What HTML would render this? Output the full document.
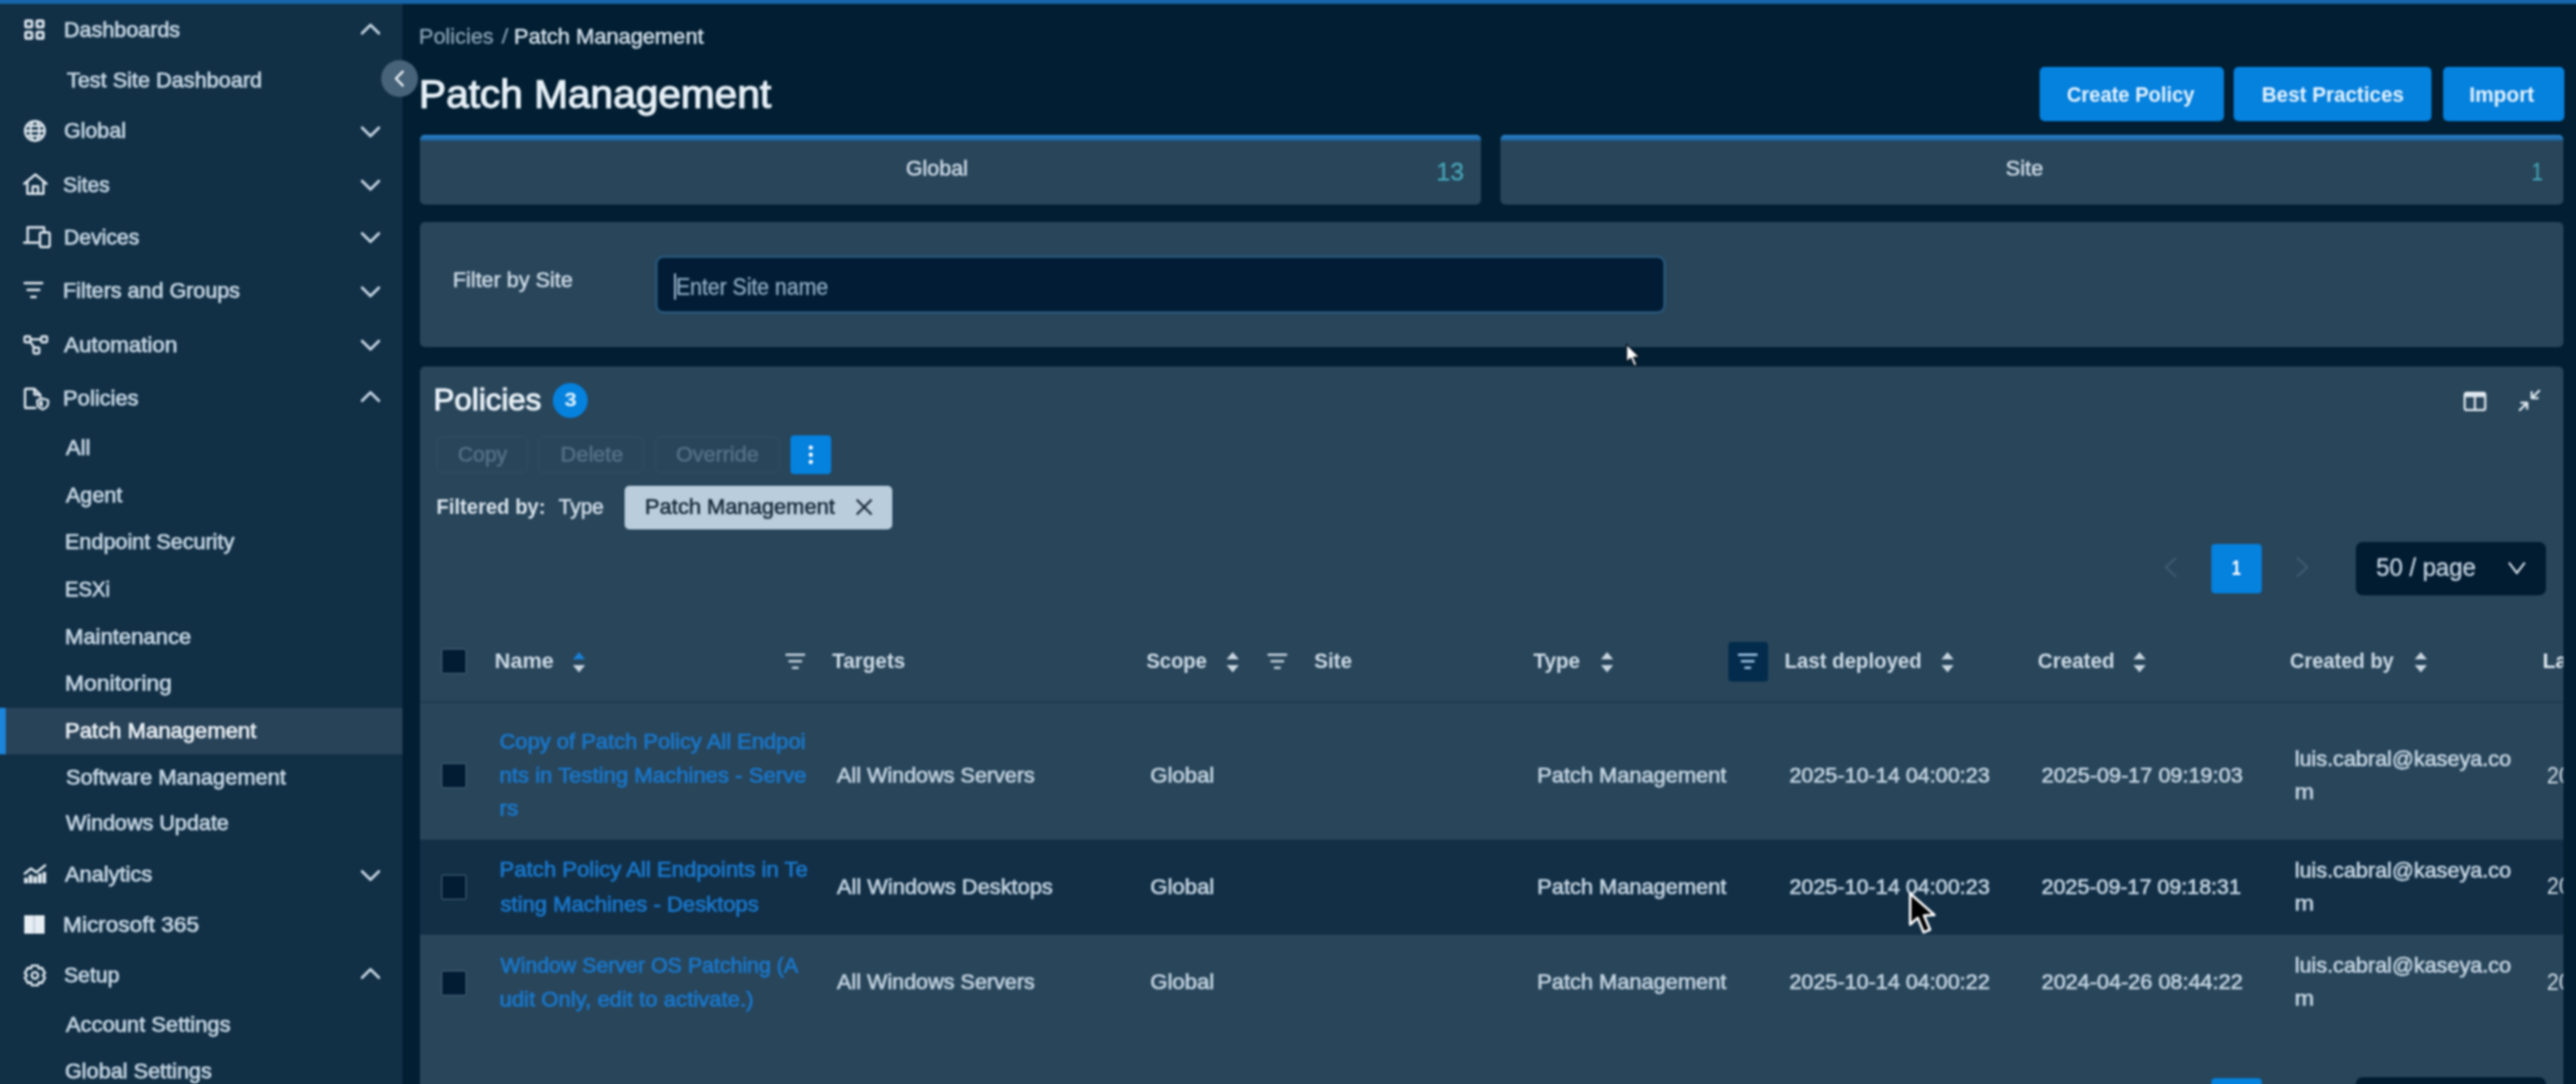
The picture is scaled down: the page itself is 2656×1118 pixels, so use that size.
<!DOCTYPE html>
<html><head><meta charset="utf-8"><title>Patch Management</title>
<style>

html,body{margin:0;padding:0;}
body{width:2656px;height:1118px;overflow:hidden;position:relative;background:#011e32;font-family:"Liberation Sans",sans-serif;}
#root{position:absolute;left:-30px;top:-30px;width:2716px;height:1178px;background:#011e32;filter:blur(1px);}
#pg{position:absolute;left:30px;top:30px;width:2656px;height:1118px;}
.a{position:absolute;}
.t{position:absolute;white-space:nowrap;line-height:1;transform-origin:0 0;display:block;}
svg{position:absolute;overflow:visible;}
.panel{position:absolute;background:#28455a;border-radius:5px;}
.btn{position:absolute;background:#0581de;border-radius:5px;}
.ghost{position:absolute;border:1.3px solid #324d64;border-radius:5px;box-sizing:border-box;}
.cb{position:absolute;width:26px;height:26px;box-sizing:border-box;background:#021c33;border:1.5px solid #4a6479;border-radius:2px;}

</style></head><body>
<div id="root"><div id="pg">
<div class="a" style="left:-30px;top:-30px;width:2716px;height:34px;background:#1766ab;z-index:5"></div>
<div class="a" style="left:-30px;top:-30px;width:444.5px;height:1178px;background:#112f45"></div>
<div class="a" style="left:-30px;top:729.5px;width:444.5px;height:48px;background:#284257"></div>
<div class="a" style="left:-30px;top:729.5px;width:35.5px;height:48px;background:#1c84da"></div>
<svg style="left:24.6px;top:20px" width="21" height="21" viewBox="0 0 21 21"><g fill="none" stroke="#dfe8ef" stroke-width="2.7"><rect x="1.35" y="1.35" width="6.6" height="6.6" rx="1.2"/><rect x="13.05" y="1.35" width="6.6" height="6.6" rx="1.2"/><rect x="1.35" y="13.05" width="6.6" height="6.6" rx="1.2"/><rect x="13.05" y="13.05" width="6.6" height="6.6" rx="1.2"/></g></svg>
<svg style="left:23.5px;top:123.2px" width="24" height="24" viewBox="-12 -12 24 24"><g fill="none" stroke="#dfe8ef" stroke-width="2.3"><circle r="10.2"/><ellipse rx="4.6" ry="10.2"/><path d="M-10 0 H10 M-8.8 -5.2 H8.8 M-8.8 5.2 H8.8"/></g></svg>
<svg style="left:23px;top:178px" width="27" height="25" viewBox="0 0 27 25"><g fill="none" stroke="#dfe8ef" stroke-width="2.4" stroke-linejoin="round" stroke-linecap="round"><path d="M2 11.5 L13.5 2 L25 11.5"/><path d="M5.2 9.5 V21.8 H21.8 V9.5"/><path d="M10.7 21.5 V14.2 H16.3 V21.5"/></g></svg>
<svg style="left:24px;top:232px" width="30" height="25" viewBox="0 0 30 25"><g fill="none" stroke="#dfe8ef" stroke-width="2.4" stroke-linejoin="round" stroke-linecap="round"><path d="M4.5 16.5 V2.5 H21.5 V6"/><path d="M1 18.3 H15"/><rect x="17.2" y="7.8" width="10" height="15" rx="1.5"/></g></svg>
<svg style="left:23.5px;top:289px" width="21" height="20" viewBox="0 0 21 20"><g stroke="#dfe8ef" stroke-width="2.6" stroke-linecap="round"><path d="M1.5 3 H19.5"/><path d="M4.5 10 H16.5"/><path d="M8.3 17.2 H12.7"/></g></svg>
<svg style="left:23.5px;top:344.5px" width="27" height="22" viewBox="0 0 27 22"><g fill="none" stroke="#dfe8ef" stroke-width="2.3" stroke-linejoin="round"><rect x="1.3" y="2" width="6" height="6" rx="1"/><rect x="18.5" y="2" width="6" height="6" rx="1"/><rect x="10.5" y="13.5" width="6" height="6" rx="1"/><path d="M7.3 5 H18.5"/><path d="M7.3 7.6 L11.3 13.5"/></g></svg>
<svg style="left:23.5px;top:398.5px" width="28" height="25" viewBox="0 0 28 25"><g fill="none" stroke="#dfe8ef" stroke-width="2.4" stroke-linejoin="round" stroke-linecap="round"><path d="M12.5 21.8 H3.2 Q1.8 21.8 1.8 20.4 V3.4 Q1.8 2 3.2 2 H11.5 L17.5 8 V10.5"/><path d="M11.5 2.5 V8 H17"/></g><path d="M20 12 L25.6 13.8 V17 Q25.6 21 20 23.2 Q14.4 21 14.4 17 V13.8 Z" fill="#112f45" stroke="#dfe8ef" stroke-width="2.2" stroke-linejoin="round"/><path d="M20 14 V21 Q16.4 19.4 16.4 17 V15.2 Z" fill="#dfe8ef"/></svg>
<svg style="left:23.5px;top:891px" width="24" height="21" viewBox="0 0 24 21"><g fill="#dfe8ef"><rect x="0.8" y="14.3" width="3.9" height="5.7"/><rect x="5.6" y="11.3" width="3.9" height="8.7"/><rect x="10.4" y="12.8" width="3.9" height="7.2"/><rect x="15.2" y="10" width="3.9" height="10"/><rect x="19.9" y="8.3" width="3.6" height="11.7"/></g><path d="M1.5 10 L8 4.8 L13.5 8.8 L22.5 1.5" fill="none" stroke="#dfe8ef" stroke-width="2.4" stroke-linejoin="round" stroke-linecap="round"/></svg>
<svg style="left:25.2px;top:943.5px" width="21" height="19" viewBox="0 0 21 19"><rect x="0" y="0" width="21" height="19" fill="#e6edf3"/><rect x="9.6" y="0" width="1.4" height="19" fill="#b9c7d3"/></svg>
<svg style="left:23.5px;top:994px" width="24" height="24" viewBox="0 0 24 24"><path d="M8.87 1.87 L15.13 1.87 L16.07 4.88 L16.13 4.91 L19.20 4.22 L22.34 9.65 L20.20 11.97 L20.20 12.03 L22.34 14.35 L19.20 19.78 L16.13 19.09 L16.07 19.12 L15.13 22.13 L8.87 22.13 L7.93 19.12 L7.87 19.09 L4.80 19.78 L1.66 14.35 L3.80 12.03 L3.80 11.97 L1.66 9.65 L4.80 4.22 L7.87 4.91 L7.93 4.88 Z" fill="none" stroke="#dfe8ef" stroke-width="2.4" stroke-linejoin="round"/><circle cx="12" cy="12" r="3.3" fill="none" stroke="#dfe8ef" stroke-width="2.3"/></svg>
<svg style="left:370px;top:21.6px" width="24" height="16" viewBox="-12 -8 24 16"><path d="M-8.6 4.2 L0 -4.3 L8.6 4.2" fill="none" stroke="#c4d5e2" stroke-width="2.9" stroke-linecap="round" stroke-linejoin="round"/></svg>
<svg style="left:370px;top:401.4px" width="24" height="16" viewBox="-12 -8 24 16"><path d="M-8.6 4.2 L0 -4.3 L8.6 4.2" fill="none" stroke="#c4d5e2" stroke-width="2.9" stroke-linecap="round" stroke-linejoin="round"/></svg>
<svg style="left:370px;top:996.1px" width="24" height="16" viewBox="-12 -8 24 16"><path d="M-8.6 4.2 L0 -4.3 L8.6 4.2" fill="none" stroke="#c4d5e2" stroke-width="2.9" stroke-linecap="round" stroke-linejoin="round"/></svg>
<svg style="left:370px;top:127.9px" width="24" height="16" viewBox="-12 -8 24 16"><path d="M-8.6 -4.2 L0 4.3 L8.6 -4.2" fill="none" stroke="#c4d5e2" stroke-width="2.9" stroke-linecap="round" stroke-linejoin="round"/></svg>
<svg style="left:370px;top:183.3px" width="24" height="16" viewBox="-12 -8 24 16"><path d="M-8.6 -4.2 L0 4.3 L8.6 -4.2" fill="none" stroke="#c4d5e2" stroke-width="2.9" stroke-linecap="round" stroke-linejoin="round"/></svg>
<svg style="left:370px;top:237.20000000000002px" width="24" height="16" viewBox="-12 -8 24 16"><path d="M-8.6 -4.2 L0 4.3 L8.6 -4.2" fill="none" stroke="#c4d5e2" stroke-width="2.9" stroke-linecap="round" stroke-linejoin="round"/></svg>
<svg style="left:370px;top:292.8px" width="24" height="16" viewBox="-12 -8 24 16"><path d="M-8.6 -4.2 L0 4.3 L8.6 -4.2" fill="none" stroke="#c4d5e2" stroke-width="2.9" stroke-linecap="round" stroke-linejoin="round"/></svg>
<svg style="left:370px;top:348.3px" width="24" height="16" viewBox="-12 -8 24 16"><path d="M-8.6 -4.2 L0 4.3 L8.6 -4.2" fill="none" stroke="#c4d5e2" stroke-width="2.9" stroke-linecap="round" stroke-linejoin="round"/></svg>
<svg style="left:370px;top:894.5999999999999px" width="24" height="16" viewBox="-12 -8 24 16"><path d="M-8.6 -4.2 L0 4.3 L8.6 -4.2" fill="none" stroke="#c4d5e2" stroke-width="2.9" stroke-linecap="round" stroke-linejoin="round"/></svg>
<div class="a" style="left:393px;top:62px;width:38px;height:38px;border-radius:50%;background:#46637a;"></div>
<svg style="left:400px;top:69px" width="24" height="24" viewBox="-12 -12 24 24"><path d="M3.2 -7.2 L-3.8 0 L3.2 7.2" fill="none" stroke="#eef3f7" stroke-width="2.4" stroke-linecap="round" stroke-linejoin="round"/></svg>
<div class="btn" style="left:2102.5px;top:69px;width:190.5px;height:56px"></div>
<div class="btn" style="left:2303px;top:69px;width:203.69999999999982px;height:56px"></div>
<div class="btn" style="left:2518.5px;top:69px;width:125.19999999999982px;height:56px"></div>
<div class="panel" style="left:433px;top:138.5px;width:1093.8px;height:72.2px;overflow:hidden"><div style="height:7.5px;background:linear-gradient(#277bc2 0%,#2474b6 50%,#1c5f98 78%,#28455a 100%)"></div></div>
<div class="panel" style="left:1547.2px;top:138.5px;width:1096.1000000000001px;height:72.2px;overflow:hidden"><div style="height:7.5px;background:linear-gradient(#277bc2 0%,#2474b6 50%,#1c5f98 78%,#28455a 100%)"></div></div>
<div class="panel" style="left:433px;top:229px;width:2210.4px;height:129px"></div>
<div class="a" style="left:677.7px;top:266.3px;width:1037.5px;height:55px;box-sizing:border-box;background:#011c34;border-radius:6px;box-shadow:0 0 0 2.5px rgba(45,115,175,0.38)"></div>
<div class="a" style="left:695.3px;top:282px;width:2.2px;height:27px;background:#9fb9cc"></div>
<div class="panel" style="left:433px;top:378px;width:2210.4px;height:790px"></div>
<div class="a" style="left:570.3px;top:394.9px;width:36px;height:36px;border-radius:50%;background:#0581de"></div>
<div class="ghost" style="left:450.4px;top:449.7px;width:94.10000000000002px;height:38.5px"></div>
<div class="ghost" style="left:555.4px;top:449.7px;width:108.60000000000002px;height:38.5px"></div>
<div class="ghost" style="left:675px;top:449.7px;width:128.70000000000005px;height:38.5px"></div>
<div class="btn" style="left:815px;top:448.8px;width:41.7px;height:40.2px;border-radius:4px"></div>
<svg style="left:824px;top:457px" width="24" height="24" viewBox="-12 -12 24 24"><g fill="#fff"><circle cy="-7.4" r="2.2"/><circle cy="0" r="2.2"/><circle cy="7.4" r="2.2"/></g></svg>
<div class="a" style="left:644.3px;top:500.5px;width:275.9px;height:45.5px;background:#b9cddc;border-radius:5px"></div>
<svg style="left:879px;top:511px" width="24" height="24" viewBox="-12 -12 24 24"><path d="M-7 -7 L7 7 M7 -7 L-7 7" stroke="#1b2b3b" stroke-width="2.3" stroke-linecap="round"/></svg>
<svg style="left:2540.2px;top:403.6px" width="23.6" height="20.2" viewBox="0 0 25 20" preserveAspectRatio="none"><rect x="1.3" y="1.3" width="22.4" height="17.4" rx="2" fill="none" stroke="#dfe8ef" stroke-width="2.4"/><rect x="1.3" y="1.3" width="22.4" height="4.2" fill="#dfe8ef"/><path d="M12.5 3 V18" stroke="#dfe8ef" stroke-width="2.4"/></svg>
<svg style="left:2596px;top:401px" width="24" height="24" viewBox="0 0 24 24"><g fill="none" stroke="#dfe8ef" stroke-width="2.3" stroke-linecap="round" stroke-linejoin="round"><path d="M22 2 L15 9 M14.3 3.5 V9.7 H20.5"/><path d="M2 22 L9 15 M3.5 14.3 H9.7 V20.5"/></g></svg>
<svg style="left:2226px;top:573px" width="24" height="24" viewBox="-12 -12 24 24"><path d="M5 -9.3 L-5 0 L5 9.3" fill="none" stroke="#405b72" stroke-width="2.2" stroke-linecap="round" stroke-linejoin="round"/></svg>
<svg style="left:2362px;top:573px" width="24" height="24" viewBox="-12 -12 24 24"><path d="M-5 -9.3 L5 0 L-5 9.3" fill="none" stroke="#405b72" stroke-width="2.2" stroke-linecap="round" stroke-linejoin="round"/></svg>
<div class="btn" style="left:2280px;top:560.5px;width:52.4px;height:51.5px;border-radius:4px"></div>
<div class="a" style="left:2429px;top:559px;width:196px;height:55px;background:#011b31;border-radius:7px"></div>
<svg style="left:2583.4px;top:574.3px" width="24" height="24" viewBox="-12 -12 24 24"><path d="M-7.7 -5.2 L0 5 L7.7 -5.2" fill="none" stroke="#cfdbe5" stroke-width="2.2" stroke-linecap="round" stroke-linejoin="round"/></svg>
<div class="btn" style="left:2280px;top:1112px;width:52.4px;height:51.5px;border-radius:4px"></div>
<div class="a" style="left:2429px;top:1111px;width:196px;height:55px;background:#011b31;border-radius:7px"></div>
<div class="a" style="left:433px;top:723px;width:2210.4px;height:2.2px;background:#213c51"></div>
<div class="a" style="left:433px;top:865.5px;width:2210.4px;height:98.3px;background:#122f46"></div>
<div class="cb" style="left:454.8px;top:669.2px"></div>
<div class="cb" style="left:454.8px;top:787px"></div>
<div class="cb" style="left:454.8px;top:901.5px"></div>
<div class="cb" style="left:454.8px;top:1000.8px"></div>
<svg style="left:589px;top:670.5px" width="16" height="24" viewBox="-8 -12 16 24"><path d="M-6.3 -3 L0 -10.5 L6.3 -3 Z" fill="#1b7fd6"/><path d="M-6.3 3 L0 10.5 L6.3 3 Z" fill="#c9d6e0"/></svg>
<svg style="left:807.7px;top:669.5px" width="24" height="24" viewBox="-12 -12 24 24"><g transform="scale(1.0)" stroke="#c3d1dc" stroke-width="2.5" stroke-linecap="round"><path d="M-9 -6.8 H9"/><path d="M-6 0 H6"/><path d="M-2.4 6.8 H2.4"/></g></svg>
<svg style="left:1263px;top:670.5px" width="16" height="24" viewBox="-8 -12 16 24"><path d="M-6.3 -3 L0 -10.5 L6.3 -3 Z" fill="#c9d6e0"/><path d="M-6.3 3 L0 10.5 L6.3 3 Z" fill="#c9d6e0"/></svg>
<svg style="left:1305px;top:669.5px" width="24" height="24" viewBox="-12 -12 24 24"><g transform="scale(1.0)" stroke="#c3d1dc" stroke-width="2.5" stroke-linecap="round"><path d="M-9 -6.8 H9"/><path d="M-6 0 H6"/><path d="M-2.4 6.8 H2.4"/></g></svg>
<svg style="left:1648.7px;top:670.5px" width="16" height="24" viewBox="-8 -12 16 24"><path d="M-6.3 -3 L0 -10.5 L6.3 -3 Z" fill="#c9d6e0"/><path d="M-6.3 3 L0 10.5 L6.3 3 Z" fill="#c9d6e0"/></svg>
<div class="a" style="left:1782px;top:662px;width:40.7px;height:40.8px;background:#032c4c;border-radius:4px"></div>
<svg style="left:1790.3px;top:670px" width="24" height="24" viewBox="-12 -12 24 24"><g transform="scale(1.0)" stroke="#9fc4e4" stroke-width="2.5" stroke-linecap="round"><path d="M-9 -6.8 H9"/><path d="M-6 0 H6"/><path d="M-2.4 6.8 H2.4"/></g></svg>
<svg style="left:2000px;top:670.5px" width="16" height="24" viewBox="-8 -12 16 24"><path d="M-6.3 -3 L0 -10.5 L6.3 -3 Z" fill="#c9d6e0"/><path d="M-6.3 3 L0 10.5 L6.3 3 Z" fill="#c9d6e0"/></svg>
<svg style="left:2198px;top:670.5px" width="16" height="24" viewBox="-8 -12 16 24"><path d="M-6.3 -3 L0 -10.5 L6.3 -3 Z" fill="#c9d6e0"/><path d="M-6.3 3 L0 10.5 L6.3 3 Z" fill="#c9d6e0"/></svg>
<svg style="left:2487.5px;top:670.5px" width="16" height="24" viewBox="-8 -12 16 24"><path d="M-6.3 -3 L0 -10.5 L6.3 -3 Z" fill="#c9d6e0"/><path d="M-6.3 3 L0 10.5 L6.3 3 Z" fill="#c9d6e0"/></svg>
<div class="a" style="left:2600px;top:640px;width:43px;height:440px;overflow:hidden"><span class="t" style="left:21.4px;top:670.9px;margin-top:-640px;font-size:22px;font-weight:700;color:#dbe5ed">Last</span><span class="t" style="left:25.5px;top:148.5px;font-size:23px;color:#d3dee7;transform:scaleX(0.96)">2025</span><span class="t" style="left:25.5px;top:263.0px;font-size:23px;color:#d3dee7;transform:scaleX(0.96)">2025</span><span class="t" style="left:25.5px;top:361.5px;font-size:23px;color:#d3dee7;transform:scaleX(0.96)">2025</span></div>
<svg style="left:1966.8px;top:918.8px;z-index:9" width="34" height="48" viewBox="0 0 34 48"><path d="M2.5 2.5 V34.5 L10.2 27.6 L16.4 42.6 L23 39.8 L16.8 25.2 L27.5 24.6 Z" fill="#000" stroke="#fff" stroke-width="2.6" stroke-linejoin="round"/></svg>
<svg style="left:1674.5px;top:352.5px;z-index:9" width="20" height="28" viewBox="0 0 20 28"><path d="M2 2 V20.5 L6.4 16.6 L9.8 24.6 L12.8 23.3 L9.5 15.5 L15.5 15.2 Z" fill="#fff" stroke="#0b1622" stroke-width="1.4" stroke-linejoin="round"/></svg>
<div id="texts">
<span class="t" style="left:65.6px;top:20.3px;font-size:21.6px;font-weight:400;color:#c5d6e3;transform:scaleX(1.0282);-webkit-text-stroke:0.75px #c5d6e3;">Dashboards</span>
<span class="t" style="left:68.5px;top:71.5px;font-size:21.6px;font-weight:400;color:#c5d6e3;transform:scaleX(1.0350);-webkit-text-stroke:0.75px #c5d6e3;">Test Site Dashboard</span>
<span class="t" style="left:65.6px;top:124.2px;font-size:21.6px;font-weight:400;color:#c5d6e3;transform:scaleX(1.0227);-webkit-text-stroke:0.75px #c5d6e3;">Global</span>
<span class="t" style="left:65.4px;top:179.6px;font-size:21.6px;font-weight:400;color:#c5d6e3;transform:scaleX(1.0019);-webkit-text-stroke:0.75px #c5d6e3;">Sites</span>
<span class="t" style="left:65.6px;top:233.5px;font-size:21.6px;font-weight:400;color:#c5d6e3;transform:scaleX(1.0105);-webkit-text-stroke:0.75px #c5d6e3;">Devices</span>
<span class="t" style="left:65.4px;top:289.1px;font-size:21.6px;font-weight:400;color:#c5d6e3;transform:scaleX(1.0270);-webkit-text-stroke:0.75px #c5d6e3;">Filters and Groups</span>
<span class="t" style="left:65.9px;top:344.6px;font-size:21.6px;font-weight:400;color:#c5d6e3;transform:scaleX(1.0691);-webkit-text-stroke:0.75px #c5d6e3;">Automation</span>
<span class="t" style="left:64.9px;top:400.1px;font-size:21.6px;font-weight:400;color:#c5d6e3;transform:scaleX(1.0460);-webkit-text-stroke:0.75px #c5d6e3;">Policies</span>
<span class="t" style="left:67.7px;top:451.3px;font-size:21.6px;font-weight:400;color:#c5d6e3;transform:scaleX(1.0560);-webkit-text-stroke:0.75px #c5d6e3;">All</span>
<span class="t" style="left:67.7px;top:499.6px;font-size:21.6px;font-weight:400;color:#c5d6e3;transform:scaleX(1.0296);-webkit-text-stroke:0.75px #c5d6e3;">Agent</span>
<span class="t" style="left:66.7px;top:548.2px;font-size:21.6px;font-weight:400;color:#c5d6e3;transform:scaleX(1.0317);-webkit-text-stroke:0.75px #c5d6e3;">Endpoint Security</span>
<span class="t" style="left:66.7px;top:597.0px;font-size:21.6px;font-weight:400;color:#c5d6e3;transform:scaleX(0.9674);-webkit-text-stroke:0.75px #c5d6e3;">ESXi</span>
<span class="t" style="left:66.6px;top:645.6px;font-size:21.6px;font-weight:400;color:#c5d6e3;transform:scaleX(1.0527);-webkit-text-stroke:0.75px #c5d6e3;">Maintenance</span>
<span class="t" style="left:66.6px;top:694.2px;font-size:21.6px;font-weight:400;color:#c5d6e3;transform:scaleX(1.0930);-webkit-text-stroke:0.75px #c5d6e3;">Monitoring</span>
<span class="t" style="left:66.6px;top:742.5px;font-size:21.6px;font-weight:400;color:#eaf0f5;transform:scaleX(1.0539);-webkit-text-stroke:0.75px #eaf0f5;">Patch Management</span>
<span class="t" style="left:67.7px;top:791.0px;font-size:21.6px;font-weight:400;color:#c5d6e3;transform:scaleX(1.0439);-webkit-text-stroke:0.75px #c5d6e3;">Software Management</span>
<span class="t" style="left:67.9px;top:838.2px;font-size:21.6px;font-weight:400;color:#c5d6e3;transform:scaleX(1.0287);-webkit-text-stroke:0.75px #c5d6e3;">Windows Update</span>
<span class="t" style="left:66.5px;top:890.9px;font-size:21.6px;font-weight:400;color:#c5d6e3;transform:scaleX(1.0415);-webkit-text-stroke:0.75px #c5d6e3;">Analytics</span>
<span class="t" style="left:65.4px;top:942.6px;font-size:21.6px;font-weight:400;color:#c5d6e3;transform:scaleX(1.0816);-webkit-text-stroke:0.75px #c5d6e3;">Microsoft 365</span>
<span class="t" style="left:66.0px;top:994.8px;font-size:21.6px;font-weight:400;color:#c5d6e3;transform:scaleX(1.0103);-webkit-text-stroke:0.75px #c5d6e3;">Setup</span>
<span class="t" style="left:67.9px;top:1046.2px;font-size:21.6px;font-weight:400;color:#c5d6e3;transform:scaleX(1.0471);-webkit-text-stroke:0.75px #c5d6e3;">Account Settings</span>
<span class="t" style="left:66.9px;top:1094.3px;font-size:21.6px;font-weight:400;color:#c5d6e3;transform:scaleX(1.0340);-webkit-text-stroke:0.75px #c5d6e3;">Global Settings</span>
<span class="t" style="left:431.6px;top:27.3px;font-size:22.5px;font-weight:400;color:#8ea5b8;transform:scaleX(0.9937);-webkit-text-stroke:0.3px #8ea5b8;">Policies</span>
<span class="t" style="left:516.8px;top:27.3px;font-size:22.5px;font-weight:400;color:#8ea5b8;transform:scaleX(1.1714);">/</span>
<span class="t" style="left:530.0px;top:27.3px;font-size:22.5px;font-weight:400;color:#d3e0ea;transform:scaleX(1.0017);-webkit-text-stroke:0.5px #d3e0ea;">Patch Management</span>
<span class="t" style="left:431.9px;top:77.4px;font-size:40.4px;font-weight:400;color:#e6eff6;transform:scaleX(1.0365);-webkit-text-stroke:1.25px #e6eff6;">Patch Management</span>
<span class="t" style="left:2131.4px;top:87.2px;font-size:22px;font-weight:700;color:#e6f3fd;transform:scaleX(0.9439);">Create Policy</span>
<span class="t" style="left:2331.8px;top:87.2px;font-size:22px;font-weight:700;color:#e6f3fd;transform:scaleX(0.9667);">Best Practices</span>
<span class="t" style="left:2546.4px;top:87.2px;font-size:22px;font-weight:700;color:#e6f3fd;transform:scaleX(0.9778);">Import</span>
<span class="t" style="left:933.5px;top:163.3px;font-size:22.5px;font-weight:400;color:#cfdce8;transform:scaleX(0.9819);-webkit-text-stroke:0.5px #cfdce8;">Global</span>
<span class="t" style="left:1481.1px;top:163.6px;font-size:26.5px;font-weight:400;color:#48a6b8;transform:scaleX(0.9649);-webkit-text-stroke:0.35px #48a6b8;">13</span>
<span class="t" style="left:2067.8px;top:163.3px;font-size:22.5px;font-weight:400;color:#cfdce8;transform:scaleX(0.9985);-webkit-text-stroke:0.5px #cfdce8;">Site</span>
<span class="t" style="left:2610.4px;top:163.6px;font-size:26.5px;font-weight:400;color:#46a7b8;transform:scaleX(0.8167);">1</span>
<span class="t" style="left:467.0px;top:278.3px;font-size:22.5px;font-weight:400;color:#cfdce8;transform:scaleX(0.9877);-webkit-text-stroke:0.55px #cfdce8;">Filter by Site</span>
<span class="t" style="left:697.2px;top:284.5px;font-size:23px;font-weight:400;color:#8dabc3;transform:scaleX(0.9508);-webkit-text-stroke:0.4px #8dabc3;">Enter Site name</span>
<span class="t" style="left:447.4px;top:396.8px;font-size:30.5px;font-weight:400;color:#e6eff6;transform:scaleX(1.0579);-webkit-text-stroke:1.1px #e6eff6;">Policies</span>
<span class="t" style="left:582.3px;top:402.4px;font-size:20.5px;font-weight:700;color:#d9f1ff;transform:scaleX(1.1091);">3</span>
<span class="t" style="left:471.5px;top:457.6px;font-size:22px;font-weight:400;color:#557087;transform:scaleX(0.9929);-webkit-text-stroke:0.6px #557087;">Copy</span>
<span class="t" style="left:577.5px;top:457.6px;font-size:22px;font-weight:400;color:#557087;transform:scaleX(1.0183);-webkit-text-stroke:0.6px #557087;">Delete</span>
<span class="t" style="left:696.5px;top:457.6px;font-size:22px;font-weight:400;color:#557087;transform:scaleX(1.0106);-webkit-text-stroke:0.6px #557087;">Override</span>
<span class="t" style="left:449.5px;top:511.8px;font-size:22.5px;font-weight:700;color:#d9e4ec;transform:scaleX(0.9270);">Filtered by:</span>
<span class="t" style="left:575.8px;top:511.8px;font-size:22.5px;font-weight:400;color:#d3e0ea;transform:scaleX(0.9531);-webkit-text-stroke:0.5px #d3e0ea;">Type</span>
<span class="t" style="left:665.0px;top:511.8px;font-size:22.5px;font-weight:400;color:#172a3c;transform:scaleX(1.0033);-webkit-text-stroke:0.6px #172a3c;">Patch Management</span>
<span class="t" style="left:2300.7px;top:574.9px;font-size:22px;font-weight:700;color:#ffffff;transform:scaleX(0.7727);">1</span>
<span class="t" style="left:2450.2px;top:572.6px;font-size:25px;font-weight:400;color:#c3d3e0;transform:scaleX(0.9848);-webkit-text-stroke:0.4px #c3d3e0;">50 / page</span>
<span class="t" style="left:509.8px;top:672.1px;font-size:21.5px;font-weight:700;color:#cddbe6;transform:scaleX(1.0417);">Name</span>
<span class="t" style="left:857.6px;top:672.1px;font-size:21.5px;font-weight:700;color:#cddbe6;transform:scaleX(0.9907);">Targets</span>
<span class="t" style="left:1181.6px;top:672.1px;font-size:21.5px;font-weight:700;color:#cddbe6;transform:scaleX(0.9665);">Scope</span>
<span class="t" style="left:1355.0px;top:672.1px;font-size:21.5px;font-weight:700;color:#cddbe6;transform:scaleX(0.9880);">Site</span>
<span class="t" style="left:1580.5px;top:672.1px;font-size:21.5px;font-weight:700;color:#cddbe6;transform:scaleX(0.9912);">Type</span>
<span class="t" style="left:1840.3px;top:672.1px;font-size:21.5px;font-weight:700;color:#cddbe6;transform:scaleX(0.9781);">Last deployed</span>
<span class="t" style="left:2100.8px;top:672.1px;font-size:21.5px;font-weight:700;color:#cddbe6;transform:scaleX(0.9908);">Created</span>
<span class="t" style="left:2360.9px;top:672.1px;font-size:21.5px;font-weight:700;color:#cddbe6;transform:scaleX(0.9634);">Created by</span>
<span class="t" style="left:515.3px;top:754.6px;font-size:21.4px;font-weight:400;color:#1a77ca;transform:scaleX(1.0572);-webkit-text-stroke:0.75px #1a77ca;">Copy of Patch Policy All Endpoi</span>
<span class="t" style="left:515.3px;top:789.6px;font-size:21.4px;font-weight:400;color:#1a77ca;transform:scaleX(1.0663);-webkit-text-stroke:0.75px #1a77ca;">nts in Testing Machines - Serve</span>
<span class="t" style="left:515.3px;top:823.9px;font-size:21.4px;font-weight:400;color:#1a77ca;transform:scaleX(1.0916);-webkit-text-stroke:0.75px #1a77ca;">rs</span>
<span class="t" style="left:862.8px;top:789.0px;font-size:22.5px;font-weight:400;color:#c3d4e1;transform:scaleX(0.9886);-webkit-text-stroke:0.7px #c3d4e1;">All Windows Servers</span>
<span class="t" style="left:1185.9px;top:789.0px;font-size:22.5px;font-weight:400;color:#c3d4e1;transform:scaleX(1.0136);-webkit-text-stroke:0.7px #c3d4e1;">Global</span>
<span class="t" style="left:1585.2px;top:789.0px;font-size:22.5px;font-weight:400;color:#c3d4e1;transform:scaleX(0.9997);-webkit-text-stroke:0.7px #c3d4e1;">Patch Management</span>
<span class="t" style="left:1845.3px;top:789.0px;font-size:22.5px;font-weight:400;color:#c3d4e1;transform:scaleX(0.9884);-webkit-text-stroke:0.7px #c3d4e1;">2025-10-14 04:00:23</span>
<span class="t" style="left:2105.0px;top:789.0px;font-size:22.5px;font-weight:400;color:#c3d4e1;transform:scaleX(0.9922);-webkit-text-stroke:0.7px #c3d4e1;">2025-09-17 09:19:03</span>
<span class="t" style="left:2366.0px;top:772.0px;font-size:22.5px;font-weight:400;color:#c3d4e1;transform:scaleX(0.9896);-webkit-text-stroke:0.7px #c3d4e1;">luis.cabral@kaseya.co</span>
<span class="t" style="left:2365.9px;top:806.0px;font-size:22.5px;font-weight:400;color:#c3d4e1;transform:scaleX(1.0588);-webkit-text-stroke:0.7px #c3d4e1;">m</span>
<span class="t" style="left:515.3px;top:886.8px;font-size:21.4px;font-weight:400;color:#1a77ca;transform:scaleX(1.0667);-webkit-text-stroke:0.75px #1a77ca;">Patch Policy All Endpoints in Te</span>
<span class="t" style="left:516.4px;top:922.8px;font-size:21.4px;font-weight:400;color:#1a77ca;transform:scaleX(1.0617);-webkit-text-stroke:0.75px #1a77ca;">sting Machines - Desktops</span>
<span class="t" style="left:862.8px;top:903.5px;font-size:22.5px;font-weight:400;color:#c3d4e1;transform:scaleX(0.9995);-webkit-text-stroke:0.7px #c3d4e1;">All Windows Desktops</span>
<span class="t" style="left:1185.9px;top:903.5px;font-size:22.5px;font-weight:400;color:#c3d4e1;transform:scaleX(1.0136);-webkit-text-stroke:0.7px #c3d4e1;">Global</span>
<span class="t" style="left:1585.2px;top:903.5px;font-size:22.5px;font-weight:400;color:#c3d4e1;transform:scaleX(0.9997);-webkit-text-stroke:0.7px #c3d4e1;">Patch Management</span>
<span class="t" style="left:1845.3px;top:903.5px;font-size:22.5px;font-weight:400;color:#c3d4e1;transform:scaleX(0.9884);-webkit-text-stroke:0.7px #c3d4e1;">2025-10-14 04:00:23</span>
<span class="t" style="left:2105.0px;top:903.5px;font-size:22.5px;font-weight:400;color:#c3d4e1;transform:scaleX(0.9835);-webkit-text-stroke:0.7px #c3d4e1;">2025-09-17 09:18:31</span>
<span class="t" style="left:2366.0px;top:886.5px;font-size:22.5px;font-weight:400;color:#c3d4e1;transform:scaleX(0.9896);-webkit-text-stroke:0.7px #c3d4e1;">luis.cabral@kaseya.co</span>
<span class="t" style="left:2365.9px;top:920.5px;font-size:22.5px;font-weight:400;color:#c3d4e1;transform:scaleX(1.0588);-webkit-text-stroke:0.7px #c3d4e1;">m</span>
<span class="t" style="left:516.4px;top:985.8px;font-size:21.4px;font-weight:400;color:#1a77ca;transform:scaleX(1.0283);-webkit-text-stroke:0.75px #1a77ca;">Window Server OS Patching (A</span>
<span class="t" style="left:515.3px;top:1021.4px;font-size:21.4px;font-weight:400;color:#1a77ca;transform:scaleX(1.0657);-webkit-text-stroke:0.75px #1a77ca;">udit Only, edit to activate.)</span>
<span class="t" style="left:862.8px;top:1002.0px;font-size:22.5px;font-weight:400;color:#c3d4e1;transform:scaleX(0.9886);-webkit-text-stroke:0.7px #c3d4e1;">All Windows Servers</span>
<span class="t" style="left:1185.9px;top:1002.0px;font-size:22.5px;font-weight:400;color:#c3d4e1;transform:scaleX(1.0136);-webkit-text-stroke:0.7px #c3d4e1;">Global</span>
<span class="t" style="left:1585.2px;top:1002.0px;font-size:22.5px;font-weight:400;color:#c3d4e1;transform:scaleX(0.9997);-webkit-text-stroke:0.7px #c3d4e1;">Patch Management</span>
<span class="t" style="left:1845.3px;top:1002.0px;font-size:22.5px;font-weight:400;color:#c3d4e1;transform:scaleX(0.9884);-webkit-text-stroke:0.7px #c3d4e1;">2025-10-14 04:00:22</span>
<span class="t" style="left:2105.0px;top:1002.0px;font-size:22.5px;font-weight:400;color:#c3d4e1;transform:scaleX(0.9922);-webkit-text-stroke:0.7px #c3d4e1;">2024-04-26 08:44:22</span>
<span class="t" style="left:2366.0px;top:985.0px;font-size:22.5px;font-weight:400;color:#c3d4e1;transform:scaleX(0.9896);-webkit-text-stroke:0.7px #c3d4e1;">luis.cabral@kaseya.co</span>
<span class="t" style="left:2365.9px;top:1019.0px;font-size:22.5px;font-weight:400;color:#c3d4e1;transform:scaleX(1.0588);-webkit-text-stroke:0.7px #c3d4e1;">m</span>
</div>
</div></div>
</body></html>
